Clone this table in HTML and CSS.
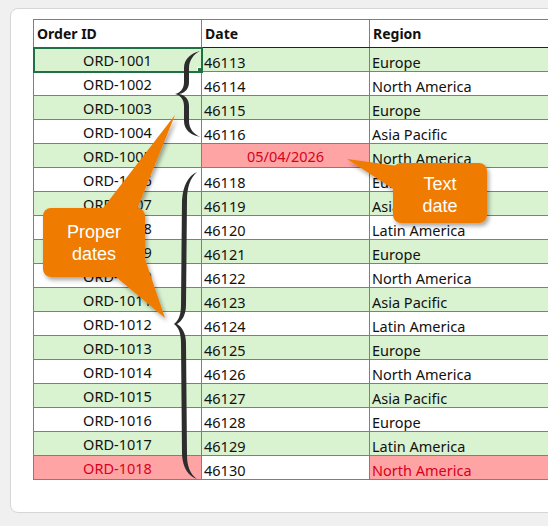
FILE: index.html
```html
<!DOCTYPE html>
<html lang="en">
<head>
    <meta charset="UTF-8">
    <meta name="viewport" content="width=device-width, initial-scale=1.0">
    <title>Order dates</title>
    <link rel="stylesheet" href="styles.css">
</head>
<body>
    <div class="card">
        <table class="sheet">
            <colgroup>
                <col class="col-id">
                <col class="col-date">
                <col class="col-region">
            </colgroup>
            <thead>
                <tr>
                    <th>Order ID</th>
                    <th class="dark">Date</th>
                    <th class="dark">Region</th>
                </tr>
            </thead>
            <tbody>
                <tr class="band"><td class="id selected">ORD-1001</td><td>46113</td><td>Europe</td></tr>
                <tr><td class="id">ORD-1002</td><td>46114</td><td>North America</td></tr>
                <tr class="band"><td class="id">ORD-1003</td><td>46115</td><td>Europe</td></tr>
                <tr><td class="id">ORD-1004</td><td>46116</td><td>Asia Pacific</td></tr>
                <tr class="band"><td class="id">ORD-1005</td><td class="bad text-date">05/04/2026</td><td>North America</td></tr>
                <tr><td class="id">ORD-1006</td><td>46118</td><td>Europe</td></tr>
                <tr class="band"><td class="id">ORD-1007</td><td>46119</td><td>Asia Pacific</td></tr>
                <tr><td class="id">ORD-1008</td><td>46120</td><td>Latin America</td></tr>
                <tr class="band"><td class="id">ORD-1009</td><td>46121</td><td>Europe</td></tr>
                <tr><td class="id">ORD-1010</td><td>46122</td><td>North America</td></tr>
                <tr class="band"><td class="id">ORD-1011</td><td>46123</td><td>Asia Pacific</td></tr>
                <tr><td class="id">ORD-1012</td><td>46124</td><td>Latin America</td></tr>
                <tr class="band"><td class="id">ORD-1013</td><td>46125</td><td>Europe</td></tr>
                <tr><td class="id">ORD-1014</td><td>46126</td><td>North America</td></tr>
                <tr class="band"><td class="id">ORD-1015</td><td>46127</td><td>Asia Pacific</td></tr>
                <tr><td class="id">ORD-1016</td><td>46128</td><td>Europe</td></tr>
                <tr class="band"><td class="id">ORD-1017</td><td>46129</td><td>Latin America</td></tr>
                <tr><td class="id bad">ORD-1018</td><td>46130</td><td class="bad">North America</td></tr>
            </tbody>
        </table>
    </div>

    <!-- braces and callouts drawn over the sheet -->
    <svg class="notes" width="548" height="526" viewBox="0 0 548 526">
        <defs>
            <filter id="shade" x="-20%" y="-20%" width="140%" height="140%">
                <feDropShadow dx="2" dy="3" stdDeviation="2" flood-color="#000" flood-opacity="0.35"/>
            </filter>
        </defs>
        <path class="brace" d="M200,51 C191,53 184,59 184,68 L184,82 C184,89 180,93 175,94 C180,95 184,99 184,106 L184,121 C184,130 191,135 200,137 C194,134 189,129 189,121 L189,106 C189,99 185,95 179,94 C185,93 189,89 189,82 L189,68 C189,60 194,54 200,51 Z"/>
        <path class="brace" d="M197,172 C188,176 183,186 182,200 L181,305 C181,316 178,321 174,324 C178,327 181,332 181,343 L182,455 C183,468 188,476 197,479 C190,474 187,466 187,455 L186,343 C186,333 182,327 177,324 C182,321 186,315 186,305 L187,200 C187,188 190,178 197,172 Z"/>

        <g class="callout" filter="url(#shade)">
            <path d="M100,212 L175,115 L136,212 Z"/>
            <path d="M110,272 L142,250 L165,318 Z"/>
            <rect x="43" y="208" width="102" height="69" rx="8"/>
        </g>
        <text class="callout-text" x="94" y="238">Proper</text>
        <text class="callout-text" x="94" y="260">dates</text>

        <g class="callout" filter="url(#shade)">
            <path d="M347,159 L398,166 L398,192 Z"/>
            <rect x="393" y="163" width="94" height="60" rx="8"/>
        </g>
        <text class="callout-text" x="440" y="190">Text</text>
        <text class="callout-text" x="440" y="212">date</text>
    </svg>
</body>
</html>
```

FILE: styles.css
```css
body {
    margin: 0;
    background: #f0f0f0;
    font-family: "Noto Sans", "Open Sans", sans-serif;
    overflow: hidden;
    position: relative;
    height: 526px;
}
.card {
    margin: 8px 0 0 10px;
    width: 620px;
    height: 505px;
    box-sizing: border-box;
    background: #fff;
    border: 1px solid #d6d6d6;
    border-radius: 8px;
    padding: 10px 0 0 22px;
}
.sheet {
    border-collapse: collapse;
    table-layout: fixed;
    width: 540px;
    font-size: 14.5px;
    color: #111;
}
.col-id { width: 168px; }
.col-date { width: 168px; }
.col-region { width: 204px; }
.sheet th,
.sheet td {
    border: 1px solid #4ea72e;
    padding: 0 2px;
    white-space: nowrap;
    overflow: hidden;
}
.sheet th {
    height: 27px;
    text-align: left;
    font-size: 14px;
    font-weight: bold;
    padding-left: 3px;
    vertical-align: middle;
    border-bottom-color: #222;
}
.sheet th:first-child {
    border-bottom-color: #4ea72e;
}
.sheet td {
    height: 23px;
    line-height: 18px;
    vertical-align: bottom;
}
.sheet td.id {
    text-align: center;
    vertical-align: middle;
}
.band td {
    background: #d9f2d0;
}
.sheet td.bad {
    background: #ffa4a4;
    color: #d8001c;
}
.sheet td.text-date {
    text-align: center;
    vertical-align: middle;
}
.sheet td.selected {
    position: relative;
    outline: 2px solid #1f7145;
    outline-offset: -1px;
}
.sheet td.selected::after {
    content: "";
    position: absolute;
    right: -3px;
    bottom: -3px;
    width: 5px;
    height: 5px;
    background: #1f7145;
    border: 1px solid #fff;
}
.notes {
    position: absolute;
    left: 0;
    top: 0;
}
.brace {
    fill: #2d2d2d;
}
.callout path,
.callout rect {
    fill: #ef7b00;
}
.callout-text {
    fill: #fff;
    font-family: "Liberation Sans", Arial, sans-serif;
    font-size: 18px;
    text-anchor: middle;
}
```
